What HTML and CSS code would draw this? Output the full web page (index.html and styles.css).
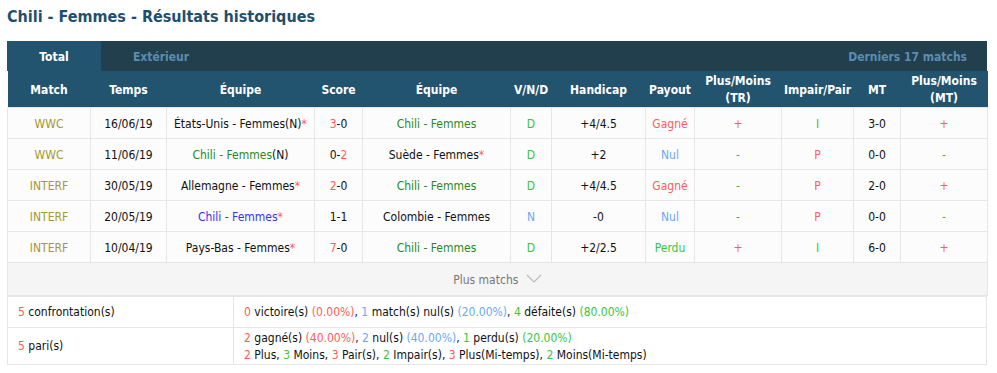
FILE: index.html
```html
<!DOCTYPE html>
<html lang="fr">
<head>
<meta charset="utf-8">
<title>Chili - Femmes - Résultats historiques</title>
<link rel="stylesheet" href="styles.css">
</head>
<body>
<h1 class="title">Chili - Femmes - Résultats historiques</h1>
<div class="panel">
  <div class="tabs">
    <div class="tab active">Total</div>
    <div class="tab">Extérieur</div>
    <div class="tab-info">Derniers 17 matchs</div>
  </div>
  <table class="results">
    <colgroup>
      <col style="width:83px"><col style="width:76px"><col style="width:148px"><col style="width:48px"><col style="width:148px"><col style="width:41px"><col style="width:94px"><col style="width:49px"><col style="width:87px"><col style="width:72px"><col style="width:47px"><col style="width:87px">
    </colgroup>
    <thead>
      <tr>
        <th>Match</th><th>Temps</th><th>Équipe</th><th>Score</th><th>Équipe</th><th>V/N/D</th><th>Handicap</th><th>Payout</th><th>Plus/Moins<br>(TR)</th><th>Impair/Pair</th><th>MT</th><th>Plus/Moins<br>(MT)</th>
      </tr>
    </thead>
    <tbody>
      <tr>
        <td class="league">WWC</td><td>16/06/19</td><td>États-Unis - Femmes(N)<span class="red">*</span></td><td><span class="red">3</span>-0</td><td class="home">Chili - Femmes</td><td class="lgreen">D</td><td>+4/4.5</td><td class="red">Gagné</td><td class="red">+</td><td class="green">I</td><td>3-0</td><td class="red">+</td>
      </tr>
      <tr>
        <td class="league">WWC</td><td>11/06/19</td><td><span class="home">Chili - Femmes</span>(N)</td><td>0-<span class="red">2</span></td><td>Suède - Femmes<span class="red">*</span></td><td class="lgreen">D</td><td>+2</td><td class="blue">Nul</td><td class="green">-</td><td class="red">P</td><td>0-0</td><td class="green">-</td>
      </tr>
      <tr>
        <td class="league">INTERF</td><td>30/05/19</td><td>Allemagne - Femmes<span class="red">*</span></td><td><span class="red">2</span>-0</td><td class="home">Chili - Femmes</td><td class="lgreen">D</td><td>+4/4.5</td><td class="red">Gagné</td><td class="green">-</td><td class="red">P</td><td>2-0</td><td class="red">+</td>
      </tr>
      <tr>
        <td class="league">INTERF</td><td>20/05/19</td><td><span class="focus">Chili - Femmes</span><span class="red">*</span></td><td>1-1</td><td>Colombie - Femmes</td><td class="blue">N</td><td>-0</td><td class="blue">Nul</td><td class="green">-</td><td class="red">P</td><td>0-0</td><td class="green">-</td>
      </tr>
      <tr>
        <td class="league">INTERF</td><td>10/04/19</td><td>Pays-Bas - Femmes<span class="red">*</span></td><td><span class="red">7</span>-0</td><td class="home">Chili - Femmes</td><td class="lgreen">D</td><td>+2/2.5</td><td class="lgreen">Perdu</td><td class="red">+</td><td class="green">I</td><td>6-0</td><td class="red">+</td>
      </tr>
      <tr class="more">
        <td colspan="12">Plus matchs <svg class="chev" width="16" height="9" viewBox="0 0 16 9"><polyline points="1,1 8,8 15,1" fill="none" stroke="#bbbbbb" stroke-width="1.2"/></svg></td>
      </tr>
    </tbody>
  </table>
  <table class="summary">
    <colgroup><col style="width:226px"><col></colgroup>
    <tbody>
      <tr class="s1">
        <td><span class="red">5</span> confrontation(s)</td>
        <td><span class="red">0</span> victoire(s) <span class="red">(0.00%)</span>, <span class="blue">1</span> match(s) nul(s) <span class="blue">(20.00%)</span>, <span class="lgreen">4</span> défaite(s) <span class="lgreen">(80.00%)</span></td>
      </tr>
      <tr class="s2">
        <td><span class="red">5</span> pari(s)</td>
        <td><div><span class="red">2</span> gagné(s) <span class="red">(40.00%)</span>, <span class="blue">2</span> nul(s) <span class="blue">(40.00%)</span>, <span class="lgreen">1</span> perdu(s) <span class="lgreen">(20.00%)</span></div>
        <div><span class="red">2</span> Plus, <span class="lgreen">3</span> Moins, <span class="red">3</span> Pair(s), <span class="lgreen">2</span> Impair(s), <span class="red">3</span> Plus(Mi-temps), <span class="lgreen">2</span> Moins(Mi-temps)</div></td>
      </tr>
    </tbody>
  </table>
</div>
</body>
</html>
```
FILE: styles.css
```css
* { box-sizing: border-box; }
body {
  margin: 0;
  padding: 0 7px;
  background: #ffffff;
  font-family: "DejaVu Sans Condensed", "DejaVu Sans", sans-serif;
  font-size: 12px;
  color: #111111;
}
.title {
  margin: 0;
  padding-top: 6px;
  height: 41px;
  font-size: 16px;
  font-weight: bold;
  color: #1f4f6e;
  line-height: 22px;
}
.panel { width: 980px; }
.tabs {
  display: flex;
  align-items: stretch;
  height: 30px;
  background: #223f4e;
}
.tab {
  width: 94px;
  display: flex;
  align-items: center;
  justify-content: center;
  font-weight: bold;
  color: #5b8db2;
  font-size: 12px;
  padding-top: 1px;
}
.tab.active {
  background: #23546f;
  color: #ffffff;
}
.tab + .tab { width: 120px; }
.tab-info {
  margin-left: auto;
  padding-right: 20px;
  padding-top: 1px;
  display: flex;
  align-items: center;
  font-weight: bold;
  color: #5b8db2;
}
table {
  border-collapse: collapse;
  table-layout: fixed;
  width: 980px;
}
.results th {
  background: #23546f;
  color: #ffffff;
  font-weight: bold;
  height: 36px;
  padding: 2px 0 0;
  line-height: 17px;
  text-align: center;
}
.results td {
  height: 31px;
  padding: 1px 0 0;
  text-align: center;
  background: #fcfcfc;
  border: 1px solid #e6e6e6;
  white-space: nowrap;
}
.results tr.more td {
  height: 33px;
  background: #f5f5f5;
  color: #777777;
}
.chev { margin-left: 4px; vertical-align: 1px; }
.summary td {
  border: 1px solid #e6e6e6;
  padding: 1px 0 0 10px;
  background: #ffffff;
  line-height: 17px;
}
.summary .s1 td { height: 31px; }
.summary .s2 td { height: 37px; }
.league { color: #a69733; }
.home { color: #2a8a1c; }
.focus { color: #3333ee; }
.red { color: #ff5c5c; }
.blue { color: #6aa8f5; }
.lgreen { color: #3cc43c; }
.green { color: #3cba3c; }
```
